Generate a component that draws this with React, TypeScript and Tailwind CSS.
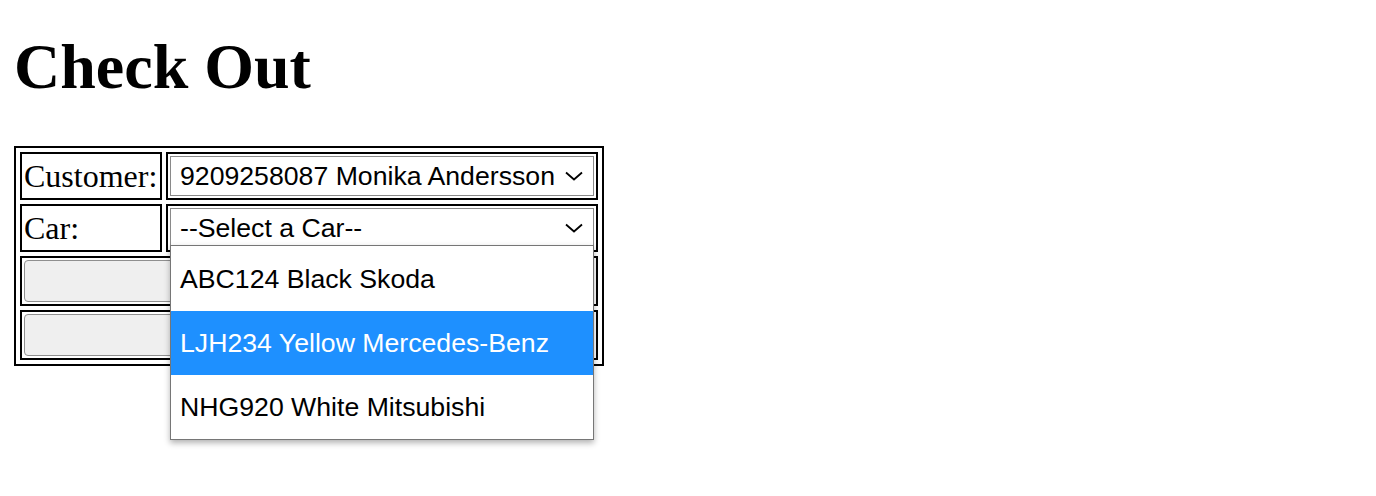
import React from "react";

const cars = ["ABC124 Black Skoda", "LJH234 Yellow Mercedes-Benz", "NHG920 White Mitsubishi"];

function Chevron() {
  return (
    <svg width="18" height="10" viewBox="0 0 18 10" className="shrink-0">
      <path d="M1 1.5 L9 8.5 L17 1.5" fill="none" stroke="#000" strokeWidth="1.8" />
    </svg>
  );
}

function FakeSelect({ value, children }: { value: string; children?: React.ReactNode }) {
  return (
    <div className="relative">
      <div className="flex h-[40px] w-[424px] items-center justify-between border border-[#8a8a8a] bg-white pl-[9px] pr-[10px] font-['Liberation_Sans',Arial,sans-serif] text-[26.67px] leading-none text-black">
        <span>{value}</span>
        <Chevron />
      </div>
      {children}
    </div>
  );
}

export default function App() {
  const selected = 1;

  return (
    <div className="min-h-[496px] bg-white pt-[30px] font-['Liberation_Serif','Times_New_Roman',serif] text-black">
      <h1 className="mb-[42px] ml-[14px] text-[64px] font-bold leading-[74px]">Check Out</h1>

      <table className="ml-[14px] border-separate border-spacing-1 border-2 border-black text-[32px]">
        <tbody>
          <tr>
            <td className="w-[142px] border-2 border-black p-[2px] leading-[40px]">Customer:</td>
            <td className="w-[432px] border-2 border-black p-[2px]">
              <FakeSelect value="9209258087 Monika Andersson" />
            </td>
          </tr>
          <tr>
            <td className="border-2 border-black p-[2px] leading-[40px]">Car:</td>
            <td className="border-2 border-black p-[2px]">
              <FakeSelect value="--Select a Car--">
                <ul className="absolute left-0 top-[37px] z-10 w-[424px] border border-[#767676] bg-white pt-px font-['Liberation_Sans',Arial,sans-serif] text-[26.67px] shadow-[0_3px_6px_rgba(0,0,0,0.3)]">
                  {cars.map((car, i) => (
                    <li
                      key={car}
                      className={`flex h-[64px] items-center pl-[9px] ${i === selected ? "bg-[#1e90ff] text-white" : "text-black"}`}
                    >
                      {car}
                    </li>
                  ))}
                </ul>
              </FakeSelect>
            </td>
          </tr>
          <tr>
            <td colSpan={2} className="border-2 border-black p-[2px]">
              <button className="block h-[42px] w-full rounded-[4px] border border-[#8f8f8f] bg-[#efefef]"></button>
            </td>
          </tr>
          <tr>
            <td colSpan={2} className="border-2 border-black p-[2px]">
              <button className="block h-[42px] w-full rounded-[4px] border border-[#8f8f8f] bg-[#efefef]"></button>
            </td>
          </tr>
        </tbody>
      </table>
    </div>
  );
}
